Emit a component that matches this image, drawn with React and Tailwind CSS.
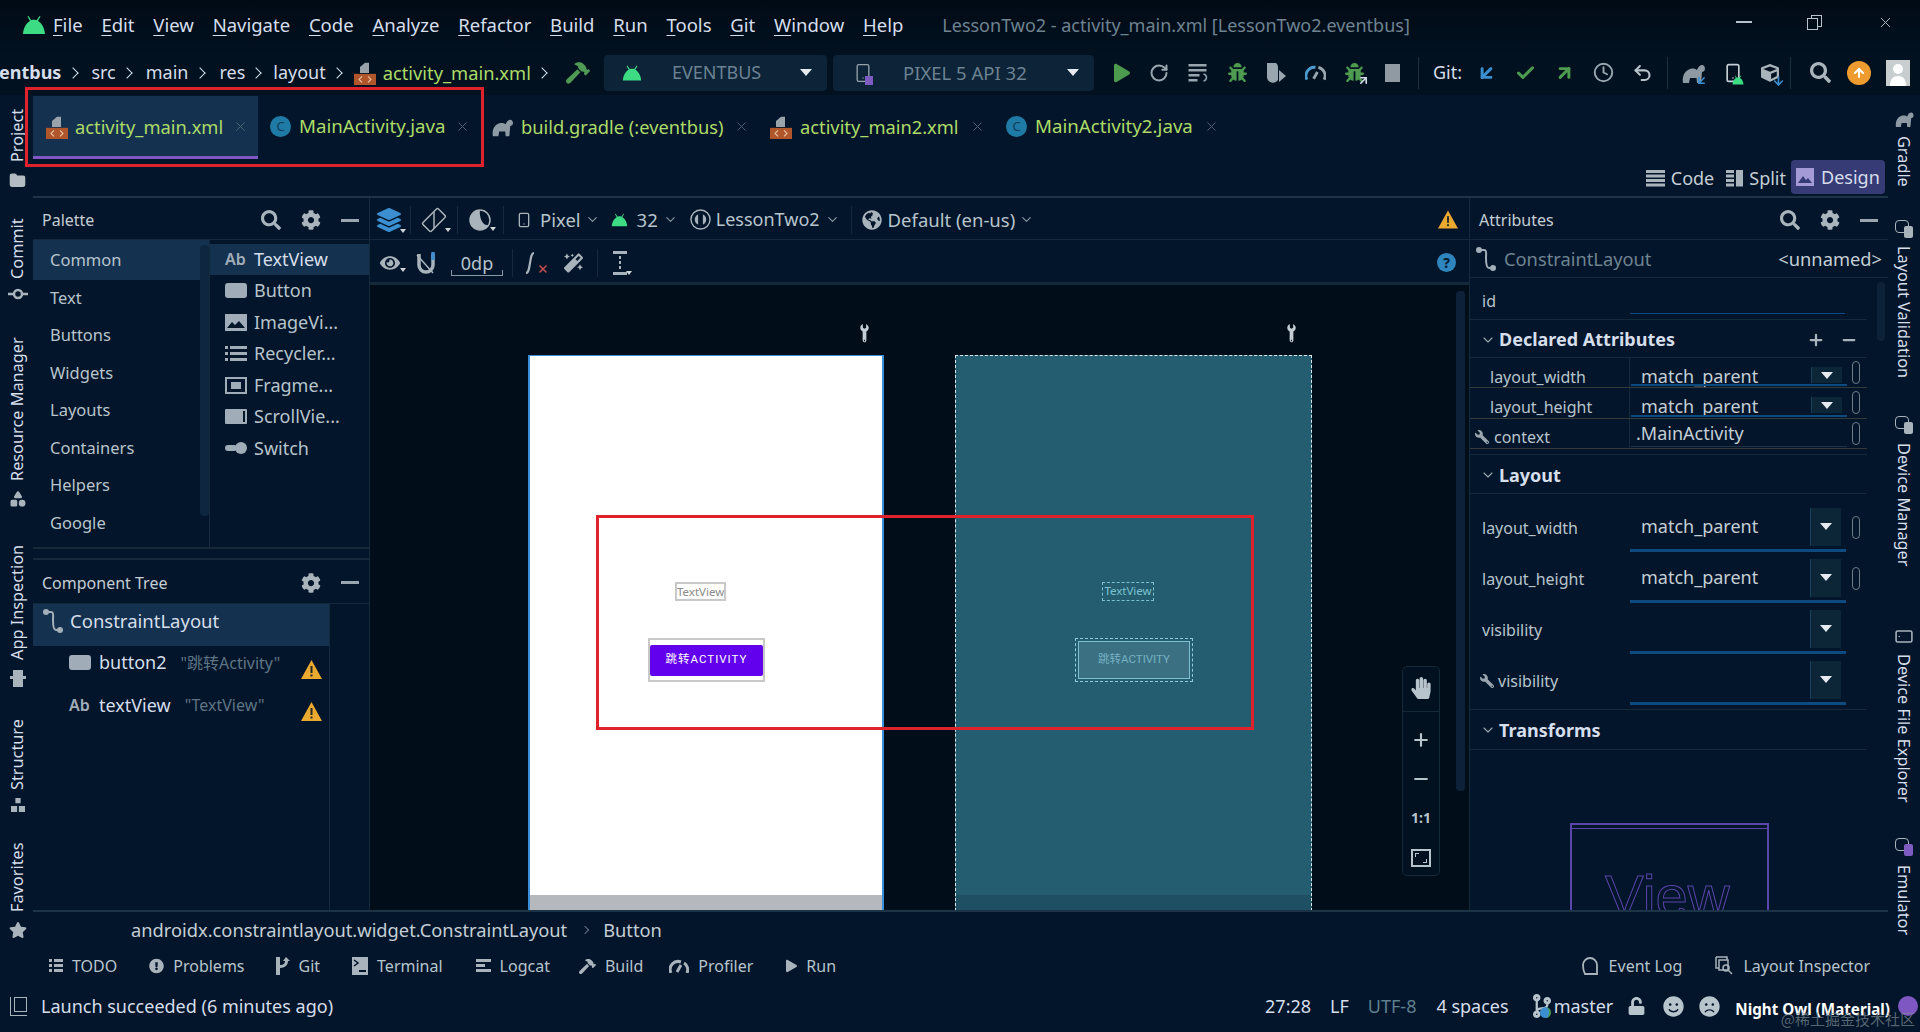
import React from "react";
import { FaCog, FaSearch, FaBug, FaWrench, FaHammer, FaStar, FaHandPaper, FaMagic, FaUnlock, FaSmile, FaFrown, FaPlay, FaExclamationCircle, FaGlobeAmericas, FaEye, FaCodeBranch, FaLayerGroup, FaCube } from "react-icons/fa";
import { ChevronDown, Check, Clock, Undo2, ArrowDownLeft, ArrowUpRight, ArrowUp, Minus, Plus, X, RotateCw, Smartphone, Shapes, Folder } from "lucide-react";

const Android = ({ c = "text-[#3ddc84]", s = "w-[22px] h-[20px]" }) => (
  <svg viewBox="0 0 24 20" className={`${c} ${s} shrink-0`} fill="currentColor"><path d="M1 19C1.5 12 5 7.5 8 6L5.5 1.5l1-.6L9.300 5.200C11 4.600 13 4.600 14.700 5.200L17.500.9l1 .6L16 6c3 1.500 6.500 6 7 13z" /></svg>
);
const XmlIcon = () => (
  <svg viewBox="0 0 22 28" preserveAspectRatio="none" className="w-[22px] h-[24px] shrink-0"><path d="M6 7 L11 2 H15 V14 H6z" fill="#9aa3aa" /><rect x="0" y="15" width="22" height="13" fill="#b0562a" /><path d="M8 18l-3 3.500 3 3.500M14 18l3 3.500-3 3.500" stroke="#e8c0a0" strokeWidth="1.200" fill="none" /></svg>
);
const ClassC = () => (
  <span className="w-[21px] h-[21px] rounded-full bg-[#1f7ba6] text-[#0d3f5a] text-[13px] flex items-center justify-center shrink-0">C</span>
);
const Elephant = ({ s = "w-[22px] h-[20px]" }) => (
  <svg viewBox="0 0 24 20" className={`${s} shrink-0`} fill="#8d99a3"><path d="M2 20c-1-6 1-12 7-14 3-1 6 0 7 1 1-3 3-5 5-5 2 0 3 2 3 4 0 2-2 3-3 3l-1 11h-4l-.500-5H9l-1 5z" /></svg>
);
const TLayout = ({ s = "w-[20px] h-[24px]" }) => (
  <svg viewBox="0 0 20 24" className={`${s} shrink-0`} fill="none" stroke="#a3b0ba" strokeWidth="2"><circle cx="3" cy="3" r="2" fill="#a3b0ba" /><circle cx="17" cy="21" r="2" fill="#a3b0ba" /><path d="M3 3h5c3 0 2 4 2 8s0 10 3 10h4" /></svg>
);
const Warn = ({ s = "w-[21px] h-[19px]" }) => (
  <svg viewBox="0 0 21 19" className={`${s} shrink-0 block`}><path d="M10.500 0L21 19H0z" fill="#eba92f" /><rect x="9.500" y="6" width="2" height="7" fill="#23272a" /><rect x="9.500" y="14.500" width="2" height="2" fill="#23272a" /></svg>
);
const Caret = ({ c = "border-t-[#e5ebf0]" }) => <span className={`block w-0 h-0 border-l-[6px] border-r-[6px] border-t-[7px] border-l-transparent border-r-transparent ${c}`} />;
const MiniCaret = () => <span className="absolute -right-[5px] bottom-0 w-0 h-0 border-l-[3px] border-r-[3px] border-t-[4px] border-l-transparent border-r-transparent border-t-[#d0d6db]" />;
const Gear = () => <FaCog className="text-[20px] text-[#aab4bc]" />;
const Find = () => <FaSearch className="text-[20px] text-[#aab4bc]" />;
const Dash = () => <span className="w-[18px] h-[3px] bg-[#9aa6af] block" />;

const menu = ["File", "Edit", "View", "Navigate", "Code", "Analyze", "Refactor", "Build", "Run", "Tools", "Git", "Window", "Help"];
const Gt = () => <span className="w-[8px] h-[8px] border-t-[1.5px] border-r-[1.5px] border-[#d6deeb] rotate-45 block" />;

function TitleBar() {
  return (
    <div className="h-[50px] flex items-center pl-[22px] bg-linear-to-b from-[#010b15] to-[#01101f] shrink-0">
      <Android s="w-[24px] h-[20px]" />
      <div className="ml-[7px] flex gap-[18.800px] text-[18.500px] text-[#d6deeb]">
        {menu.map((m) => (
          <span key={m}><span className="underline underline-offset-[3px] decoration-1">{m[0]}</span>{m.slice(1)}</span>
        ))}
      </div>
      <span className="ml-[39px] text-[18px] text-[#6f8391]">LessonTwo2 - activity_main.xml [LessonTwo2.eventbus]</span>
      <div className="ml-auto flex items-center text-[#b8c2ca] pr-[26px] gap-[55px] -mt-[6px]">
        <span className="w-[16px] h-[2px] bg-[#b8c2ca] block" />
        <span className="relative w-[15px] h-[15px] block">
          <span className="absolute right-0 top-0 w-[11px] h-[12px] border-[1.5px] border-[#b8c2ca] block" />
          <span className="absolute left-0 bottom-0 w-[11px] h-[12px] border-[1.5px] border-[#b8c2ca] bg-[#010d19] block" />
        </span>
        <X className="w-[17px] h-[17px]" strokeWidth={1.3} />
      </div>
    </div>
  );
}

function Toolbar() {
  return (
    <div className="h-[45px] flex items-center text-[18px] text-[#d6deeb] bg-[#01111f] shrink-0 overflow-hidden">
      <div className="flex items-center w-[600px] shrink-0 -ml-[1px]">
        <span className="font-bold">entbus</span>
        <span className="ml-[8px]"><Gt /></span>
        <span className="ml-[14px]">src</span>
        <span className="ml-[7px]"><Gt /></span>
        <span className="ml-[15px]">main</span>
        <span className="ml-[8px]"><Gt /></span>
        <span className="ml-[15px]">res</span>
        <span className="ml-[7px]"><Gt /></span>
        <span className="ml-[13px]">layout</span>
        <span className="ml-[7px]"><Gt /></span>
        <span className="ml-[13px] flex items-center gap-[7px]"><XmlIcon /><span className="text-[#addb67] text-[18.300px]">activity_main.xml</span></span>
        <span className="ml-[7px]"><Gt /></span>
        <FaHammer className="ml-[20px] text-[24px] text-[#4f9a55]" />
      </div>
      <div className="w-[223px] h-[36px] ml-[5px] bg-[#0c2338] rounded-sm flex items-center pl-[18px] shrink-0 text-[#6c8292]">
        <Android s="w-[20px] h-[18px]" />
        <span className="ml-[30px]">EVENTBUS</span>
        <span className="ml-auto mr-[15px]"><Caret /></span>
      </div>
      <div className="w-[261px] h-[36px] ml-[6px] bg-[#0c2338] rounded-sm flex items-center pl-[20px] shrink-0 text-[#6c8292]">
        <span className="relative"><Smartphone className="w-[20px] h-[24px] text-[#95a2ab]" strokeWidth={1.6} /><span className="absolute right-0 bottom-0 w-[8px] h-[9px] bg-[#7d5bc0] block" /></span>
        <span className="ml-[30px] text-[18.500px]">PIXEL 5 API 32</span>
        <span className="ml-auto mr-[15px]"><Caret /></span>
      </div>
      <div className="flex items-center ml-[20px] gap-[19px] shrink-0">
        <FaPlay className="w-[16px] h-[20px] text-[#4c9b4f]" />
        <RotateCw className="w-[20px] h-[22px] text-[#9aa6af]" strokeWidth={2.4} />
        <svg viewBox="0 0 20 20" className="w-[21px] h-[20px]" fill="#9aa6af"><path d="M0 1h18v2.500H0zM0 6h18v2.500H0zM0 11h11v2.500H0zM0 16h9v2.500H0z" /><path d="M15 11c4 1 4 6 0 7" stroke="#8ca0ad" fill="none" strokeWidth="1.500" /></svg>
        <FaBug className="w-[19px] h-[21px] text-[#4c9b4f]" />
        <svg viewBox="0 0 20 22" className="w-[20px] h-[22px]" fill="#9aa6af"><path d="M1 1h9a5 5 0 0 1 2 4v13a6 6 0 0 1-11-3z" /><path d="M13 8l7 6-7 6z" /></svg>
        <svg viewBox="0 0 22 20" className="w-[21px] h-[20px]" fill="none" strokeWidth="3"><path d="M2 17a9 9 0 0 1 9-13" stroke="#4c9bd0" /><path d="M14 4a9 9 0 0 1 6 13M9 16l4-7" stroke="#9aa6af" /></svg>
        <span className="relative"><FaBug className="w-[19px] h-[21px] text-[#4c9b4f]" /><ArrowUpRight className="absolute -right-[6px] -bottom-[4px] w-[13px] h-[13px] text-[#d6deeb]" strokeWidth={3} /></span>
        <span className="w-[15px] h-[18px] bg-[#8f9aa3] block ml-[2px]" />
      </div>
      <div className="ml-[18px] w-[1px] h-[32px] bg-[#1a2f40]" />
      <span className="ml-[14px] text-[18px]">Git:</span>
      <div className="flex items-center ml-[14px] gap-[18px] shrink-0">
        <ArrowDownLeft className="w-[21px] h-[24px] text-[#3b8fd0]" strokeWidth={3.4} />
        <Check className="w-[21px] h-[24px] text-[#4c9b4f]" strokeWidth={3.5} />
        <ArrowUpRight className="w-[21px] h-[24px] text-[#4c9b4f]" strokeWidth={3.4} />
        <Clock className="w-[21px] h-[21px] text-[#9aa6af]" strokeWidth={2.2} />
        <Undo2 className="w-[21px] h-[22px] text-[#b9c3cb]" strokeWidth={2.4} />
      </div>
      <div className="ml-[14px] w-[1px] h-[32px] bg-[#1a2f40]" />
      <div className="flex items-center ml-[13px] gap-[18px] shrink-0">
        <span className="relative"><Elephant s="w-[24px] h-[20px]" /><ArrowDownLeft className="absolute -right-[3px] -bottom-[4px] w-[13px] h-[13px] text-[#3b8fd0]" strokeWidth={3} /></span>
        <span className="relative"><Smartphone className="w-[20px] h-[24px] text-[#c5ced5]" strokeWidth={2} /><span className="absolute -right-[2px] bottom-0 text-[#3ddc84]"><Android s="w-[14px] h-[10px]" /></span></span>
        <span className="relative"><FaCube className="w-[18px] h-[20px] text-[#a9b3bb]" /><ArrowDownLeft className="absolute -right-[6px] -bottom-[5px] w-[13px] h-[14px] text-[#3b8fd0] -rotate-45" strokeWidth={3} /></span>
      </div>
      <div className="ml-[11px] w-[1px] h-[32px] bg-[#1a2f40]" />
      <FaSearch className="ml-[19px] w-[21px] h-[21px] text-[#aab4bc]" />
      <span className="ml-[16px] w-[24px] h-[24px] rounded-full bg-[#ee9c2f] flex items-center justify-center shrink-0"><ArrowUp className="w-[14px] h-[14px] text-white" strokeWidth={3.5} /></span>
      <span className="ml-[15px] w-[24px] h-[26px] bg-[#c8cdd0] flex items-end justify-center overflow-hidden shrink-0">
        <svg viewBox="0 0 24 26" className="w-[24px] h-[26px]" fill="#fff"><circle cx="12" cy="9" r="5" /><path d="M4 26c0-7 3-10 8-10s8 3 8 10z" /></svg>
      </span>
    </div>
  );
}

const VText = ({ children, h, rev }) => (
  <span className={`${h} flex ${rev ? "" : "rotate-180"} [writing-mode:vertical-rl] text-[16.300px] leading-none text-[#d6deeb] whitespace-nowrap`}>{children}</span>
);

function LeftStrip() {
  return (
    <div className="w-[33px] shrink-0 flex flex-col items-center text-[#a9b3bb] pl-[2px]">
      <div className="mt-[13px]"><VText h="h-[54px]">Project</VText></div>
      <Folder className="mt-[10px] w-[17px] h-[17px] fill-[#b3bcc3] text-[#b3bcc3]" />
      <div className="mt-[29px]"><VText h="h-[61px]">Commit</VText></div>
      <svg viewBox="0 0 20 14" className="mt-[8px] w-[20px] h-[14px]" fill="none" stroke="#aab4bc" strokeWidth="2.500"><circle cx="10" cy="7" r="4" /><path d="M0 7h6M14 7h6" /></svg>
      <div className="mt-[39px]"><VText h="h-[141px]">Resource Manager</VText></div>
      <Shapes className="mt-[9px] w-[18px] h-[18px] text-[#a9b3bb] fill-[#a9b3bb]" />
      <div className="mt-[39px]"><VText h="h-[113px]">App Inspection</VText></div>
      <svg viewBox="0 0 16 18" className="mt-[9px] w-[16px] h-[18px]" fill="#a9b3bb"><path d="M3 1h10v6h3v3h-3v8H3v-8H0V7h3z" /></svg>
      <div className="mt-[32px]"><VText h="h-[71px]">Structure</VText></div>
      <svg viewBox="0 0 16 16" className="mt-[8px] w-[14px] h-[14px]" fill="#a9b3bb"><path d="M5 0h6v6H5zM0 9h7v7H0zM9 9h7v7H9z" /></svg>
      <div className="mt-[34px]"><VText h="h-[66px]">Favorites</VText></div>
      <FaStar className="mt-[9px] text-[18px] text-[#a9b3bb]" />
    </div>
  );
}

function RightStrip() {
  const Dev = ({ dot }) => (
    <span className="relative block w-[18px] h-[18px]">
      <span className="absolute left-0 top-0 w-[14px] h-[13px] border-[1.5px] border-[#a9b3bb] rounded-sm" />
      <span className={`absolute right-0 bottom-0 w-[9px] h-[12px] ${dot ? "bg-[#7d5bc0]" : "bg-[#a9b3bb]"} rounded-[2px]`} />
    </span>
  );
  return (
    <div className="w-[32px] shrink-0 flex flex-col items-center overflow-hidden">
      <div className="mt-[16px]"><Elephant s="w-[20px] h-[16px]" /></div>
      <div className="mt-[9px]"><VText rev h="h-[50px]">Gradle</VText></div>
      <div className="mt-[34px]"><Dev /></div>
      <div className="mt-[8px]"><VText rev h="h-[132px]">Layout Validation</VText></div>
      <div className="mt-[38px]"><Dev /></div>
      <div className="mt-[9px]"><VText rev h="h-[121px]">Device Manager</VText></div>
      <div className="mt-[63px]"><Smartphone className="w-[20px] h-[19px] text-[#a9b3bb] rotate-90" strokeWidth={2} /></div>
      <div className="mt-[8px]"><VText rev h="h-[148px]">Device File Explorer</VText></div>
      <div className="mt-[36px]"><Dev dot /></div>
      <div className="mt-[9px]"><VText rev h="h-[67px]">Emulator</VText></div>
    </div>
  );
}

function Tab({ icon, label, active, w, size = "text-[18.300px]" }) {
  return (
    <div className={`${w} h-[63px] pb-[2px] flex items-center shrink-0 relative ${size} ${active ? "bg-[#143250]" : ""}`}>
      {icon}
      <span className={`text-[#addb67] ${active ? "ml-[7px]" : "ml-[8px]"}`}>{label}</span>
      <X className="ml-auto mr-[10px] w-[15px] h-[15px] text-[#4f6675]" strokeWidth={1.5} />
      {active && <span className="absolute left-0 right-0 bottom-0 h-[3px] bg-[#7e57c2] block" />}
    </div>
  );
}

function Tabs() {
  return (
    <div className="h-[64px] mt-[1px] flex shrink-0 items-start">
      <Tab active w="w-[225px] pl-[13px]" icon={<XmlIcon />} label="activity_main.xml" />
      <Tab w="w-[222px] pl-[12px]" size="text-[18.700px]" icon={<ClassC />} label="MainActivity.java" />
      <Tab w="w-[279px] pl-[11px]" icon={<Elephant />} label="build.gradle (:eventbus)" />
      <Tab w="w-[236px] pl-[11px]" icon={<XmlIcon />} label="activity_main2.xml" />
      <Tab w="w-[234px] pl-[11px]" size="text-[18.700px]" icon={<ClassC />} label="MainActivity2.java" />
    </div>
  );
}

function ModeRow() {
  return (
    <div className="h-[38px] shrink-0 flex justify-end items-start border-b-[2px] border-[#1c3446] text-[18px] text-[#c5ced5] pr-[3px]">
      <div className="flex items-center h-[36px] gap-[6px]">
        <svg viewBox="0 0 19 17" className="w-[19px] h-[17px]" fill="#a9b3bb"><path d="M0 0h19v3H0zM0 4.500h19v3H0zM0 9h19v3H0zM0 13.500h19v3H0z" /></svg>
        <span>Code</span>
      </div>
      <div className="flex items-center h-[36px] gap-[6px] ml-[12px]">
        <svg viewBox="0 0 17 17" className="w-[17px] h-[17px]" fill="#a9b3bb"><path d="M0 0h8v3H0zM0 4.500h8v3H0zM0 9h8v3H0zM0 13.500h8v3H0zM10 0h7v16.500h-7z" /></svg>
        <span>Split</span>
      </div>
      <div className="flex items-center h-[34px] gap-[7px] ml-[5px] bg-[#363b76] rounded-sm px-[5px] w-[94px]">
        <svg viewBox="0 0 18 18" className="w-[18px] h-[18px]"><rect width="18" height="18" fill="#a49bd6" /><path d="M2 15l5-7 3 4 2-2 4 5z" fill="#363b76" /></svg>
        <span className="text-[#d6deeb]">Design</span>
      </div>
    </div>
  );
}

function PanelHead({ title, search, h = "h-[42px]" }) {
  return (
    <div className={`${h} flex items-center pl-[9px] pt-[3px] border-b border-[#14293a] text-[#c5ced5] text-[16px] shrink-0`}>
      <span>{title}</span>
      <div className="ml-auto flex items-center gap-[20px] pr-[10px]">
        {search && <Find />}
        <Gear />
        <Dash />
      </div>
    </div>
  );
}

const IconBox = ({ children }) => <span className="w-[22px] h-[18px] flex items-center justify-center shrink-0">{children}</span>;
const AbIcon = () => <span className="w-[22px] text-[16px] font-semibold text-[#a0adb8] leading-none shrink-0">Ab</span>;
const BtnIcon = () => <span className="w-[22px] h-[15px] rounded-[3px] bg-[#a0adb8] block shrink-0" />;
const palette = [
  [<AbIcon />, "TextView"],
  [<BtnIcon />, "Button"],
  [<svg viewBox="0 0 22 17" className="w-[22px] h-[17px]"><rect width="22" height="17" fill="#a0adb8" /><path d="M2 14l5-6 3 3 4-4 6 7z" fill="#02162a" /></svg>, "ImageVi..."],
  [<svg viewBox="0 0 22 15" className="w-[22px] h-[15px]" fill="#a0adb8"><path d="M0 0h3v3H0zM5 0h17v3H5zM0 6h3v3H0zM5 6h17v3H5zM0 12h3v3H0zM5 12h17v3H5z" /></svg>, "Recycler..."],
  [<svg viewBox="0 0 22 17" className="w-[22px] h-[17px]"><rect x="1" y="1" width="20" height="15" fill="none" stroke="#a0adb8" strokeWidth="2" /><rect x="6" y="5" width="10" height="7" fill="#a0adb8" /></svg>, "Fragme..."],
  [<svg viewBox="0 0 22 15" className="w-[22px] h-[15px]"><rect width="22" height="15" rx="1" fill="#a0adb8" /><rect x="18" y="2" width="2" height="11" fill="#02162a" /></svg>, "ScrollVie..."],
  [<svg viewBox="0 0 22 12" className="w-[22px] h-[12px]" fill="#a0adb8"><rect x="0" y="3" width="12" height="6" rx="3" /><circle cx="16" cy="6" r="6" /></svg>, "Switch"],
];
const cats = ["Common", "Text", "Buttons", "Widgets", "Layouts", "Containers", "Helpers", "Google"];

function LeftPanel() {
  return (
    <div className="w-[337px] shrink-0 border-r border-[#14293a] flex flex-col text-[#b8c4cc] text-[16.500px]">
      <PanelHead title="Palette" search />
      <div className="flex h-[307px] shrink-0">
        <div className="w-[176px] flex relative">
          <div className="flex-1 pt-[2px]">
            {cats.map((c, i) => (
              <div key={c} className={`flex items-center pl-[17px] ${i === 0 ? "h-[39.500px] -mt-[2px] pt-[2px] bg-[#143250]" : "h-[37.500px]"}`}>{c}</div>
            ))}
          </div>
          <span className="absolute right-0 top-[5px] w-[9px] h-[271px] rounded-[4px] bg-[#0e2640] block" />
        </div>
        <div className="flex-1 border-l border-[#14293a] pt-[3.500px] text-[18px]">
          {palette.map(([ic, l], i) => (
            <div key={l} className={`h-[31.500px] flex items-center pl-[15px] gap-[7px] ${i === 0 ? "bg-[#143250] text-[#d6deeb]" : ""}`}>
              <IconBox>{ic}</IconBox>
              <span>{l}</span>
            </div>
          ))}
        </div>
      </div>
      <div className="h-[13px] shrink-0 border-t-[2px] border-b-[2px] border-[#14293a]" />
      <PanelHead title="Component Tree" h="h-[43.500px]" />
      <div className="flex-1 flex">
        <div className="w-[297px] border-r border-[#14293a]">
          <div className="h-[42px] pb-[8px] bg-[#143250] flex items-center pl-[10px] gap-[7px] text-[18.500px] text-[#d6deeb]">
            <TLayout />
            <span>ConstraintLayout</span>
          </div>
          <div className="h-[42.500px] pb-[8px] flex items-center pl-[36px] text-[18px] text-[#d6deeb]">
            <BtnIcon />
            <span className="ml-[8px]">button2</span>
            <span className="ml-[14px] text-[16px] text-[#5f7484]">"跳转Activity"</span>
            <span className="ml-auto mr-[7px] mt-[13px]"><Warn /></span>
          </div>
          <div className="h-[42.500px] pb-[8px] flex items-center pl-[36px] text-[18px] text-[#d6deeb]">
            <AbIcon />
            <span className="ml-[8px]">textView</span>
            <span className="ml-[14px] text-[16px] text-[#5f7484]">"TextView"</span>
            <span className="ml-auto mr-[7px] mt-[13px]"><Warn /></span>
          </div>
        </div>
      </div>
    </div>
  );
}

const TB = ({ children, cls = "" }) => <span className={`relative flex items-center justify-center ${cls}`}>{children}</span>;
const Chev = () => <ChevronDown className="w-[15px] h-[15px] text-[#8a98a3] block" strokeWidth={1.8} />;
const VSep = () => <span className="w-[1px] h-[28px] bg-[#14293a] block" />;

function CanvasTop() {
  return (
    <>
      <div className="h-[42px] pt-[2px] flex items-center border-b border-[#14293a] text-[18.500px] text-[#b8c4cc] shrink-0">
        <span className="ml-[7px]"><TB><FaLayerGroup className="w-[24px] h-[26px] text-[#3b8fd0]" /><MiniCaret /></TB></span>
        <span className="ml-[9px]"><VSep /></span>
        <span className="ml-[11px]"><TB><svg viewBox="0 0 24 24" className="w-[24px] h-[24px] rotate-45" fill="none" stroke="#a9b3bb" strokeWidth="1.500"><rect x="6" y="1" width="12" height="22" rx="1.500" /><path d="M6 6l12 12" /></svg><MiniCaret /></TB></span>
        <span className="ml-[11px]"><VSep /></span>
        <span className="ml-[11px]"><TB><svg viewBox="0 0 22 22" className="w-[22px] h-[22px]"><circle cx="11" cy="11" r="10" fill="none" stroke="#a9b3bb" strokeWidth="1.500" /><path d="M11 1a10 10 0 0 0 0 20c6 0 8-4 8-5-6 1-9-9-8-15z" fill="#a9b3bb" /></svg><MiniCaret /></TB></span>
        <span className="ml-[12px]"><VSep /></span>
        <Smartphone className="ml-[12px] w-[16px] h-[22px] text-[#a9b3bb]" strokeWidth={2} />
        <span className="ml-[8px]">Pixel</span>
        <span className="ml-[4px]"><Chev /></span>
        <span className="ml-[11px]"><Android s="w-[17px] h-[14px]" /></span>
        <span className="ml-[9px]">32</span>
        <span className="ml-[5px]"><Chev /></span>
        <svg viewBox="0 0 22 22" className="ml-[12px] w-[21px] h-[21px]"><circle cx="11" cy="11" r="10" fill="none" stroke="#a9b3bb" strokeWidth="1.500" /><circle cx="11" cy="11" r="6" fill="#a9b3bb" /><path d="M11 5v12" stroke="#02162a" strokeWidth="5" /></svg>
        <span className="ml-[5px] text-[18px]">LessonTwo2</span>
        <span className="ml-[5px]"><Chev /></span>
        <span className="ml-[11px]"><VSep /></span>
        <FaGlobeAmericas className="ml-[10px] w-[20px] h-[20px] text-[#a9b3bb]" />
        <span className="ml-[6px]">Default (en-us)</span>
        <span className="ml-[4px]"><Chev /></span>
        <span className="ml-auto mr-[11px]"><Warn s="w-[20px] h-[19px]" /></span>
      </div>
      <div className="h-[45px] pt-[3px] flex items-center border-b-[3px] border-[#14293a] text-[18px] text-[#b8c4cc] shrink-0">
        <span className="ml-[9px]"><TB><FaEye className="w-[22px] h-[18px] text-[#a9b3bb]" /><MiniCaret /></TB></span>
        <svg viewBox="0 0 22 24" className="ml-[14px] w-[22px] h-[24px]" fill="none" strokeWidth="3.500"><path d="M4 3v11a7 7 0 0 0 14 0V3" stroke="#a9b3bb" /><path d="M18 1v8" stroke="#3b8fd0" /><path d="M2 4l16 18" stroke="#a9b3bb" strokeWidth="1.500" /></svg>
        <span className="relative ml-[14px] w-[52px] h-[26px] flex items-center justify-center leading-none">
          0dp
          <span className="absolute left-0 right-0 bottom-0 h-[6px] border-b border-l border-r border-[#8a98a3] block" />
        </span>
        <span className="ml-[9px]"><VSep /></span>
        <span className="ml-[9px] relative"><svg viewBox="0 0 24 24" className="w-[24px] h-[24px]" fill="none" stroke="#a9b3bb" strokeWidth="2.200"><path d="M4 22c5 0 3-20 8-20" /></svg><X className="absolute -right-[3px] bottom-0 w-[12px] h-[12px] text-[#c94f4f]" strokeWidth={3} /></span>
        <FaMagic className="ml-[18px] w-[19px] h-[20px] text-[#a9b3bb]" />
        <span className="ml-[14px]"><VSep /></span>
        <span className="ml-[15px]"><TB><svg viewBox="0 0 14 24" className="w-[14px] h-[24px]" fill="#a9b3bb"><path d="M0 0h14v3H0zM0 21h14v3H0zM6 5h2v3H6zM6 10h2v3H6zM6 15h2v3H6z" /></svg><MiniCaret /></TB></span>
        <span className="ml-auto mr-[13px] w-[19px] h-[19px] rounded-full bg-[#2f86bf] text-[#02162a] text-[14px] font-bold flex items-center justify-center">?</span>
      </div>
    </>
  );
}

const Pin = () => <FaWrench className="w-[15px] h-[17px] text-[#c5ced5] -rotate-45" />;

function Phone() {
  return (
    <div className="relative w-[356px] h-[556px] shrink-0 bg-white border-x-2 border-t border-[#3a8fd8]">
      <div className="absolute left-[145px] top-[226px] w-[51px] h-[19px] border-2 border-[#c8c8c8] text-[11.500px] leading-[15px] text-[#8a8a8a] text-center overflow-hidden">TextView</div>
      <div className="absolute left-[118px] top-[282px] w-[117px] h-[44px] border-2 border-[#c8c8c8] flex items-center justify-center">
        <div className="w-[114px] h-[31px] rounded-[2px] bg-[#6200ee] text-white text-[11.500px] tracking-[1px] flex items-center justify-center" style={{ fontFamily: '"Roboto","Noto Sans CJK SC",sans-serif' }}>跳转ACTIVITY</div>
      </div>
      <div className="absolute left-0 right-0 bottom-0 h-[16px] bg-[#b5b9bd]" />
    </div>
  );
}
function Blueprint() {
  return (
    <div className="relative w-[357px] h-[556px] shrink-0 bg-[#235d6f] border-x border-t border-dashed border-[#dbe6ea]">
      <div className="absolute left-[146px] top-[226px] w-[52px] h-[19px] border border-dashed border-[#7cc0d0] text-[11.500px] leading-[16px] text-[#7cc0d0] text-center overflow-hidden">TextView</div>
      <div className="absolute left-[119px] top-[282px] w-[118px] h-[44px] border border-dashed border-[#8fcbd8] p-[2px]">
        <div className="w-full h-full border border-[#7cc0d0] bg-[#3b7083] text-[#76b1c2] text-[11.500px] flex items-center justify-center" style={{ fontFamily: '"Roboto","Noto Sans CJK SC",sans-serif' }}>跳转ACTIVITY</div>
      </div>
      <div className="absolute left-0 right-0 bottom-0 h-[16px] bg-[#1e4f63]" />
    </div>
  );
}

function Canvas() {
  return (
    <div className="w-[1099px] shrink-0 flex flex-col">
      <CanvasTop />
      <div className="flex-1 relative bg-[#010d19] overflow-hidden flex flex-col">
        <div className="flex h-[70px] shrink-0 items-end pb-[14px]">
          <span className="ml-[487px]"><Pin /></span>
          <span className="ml-[412px]"><Pin /></span>
        </div>
        <div className="flex pl-[158px] gap-[71px]">
          <Phone />
          <Blueprint />
        </div>
        <span className="absolute right-[4px] top-[6px] w-[9px] h-[500px] bg-[#0d2238] rounded-[4px] block" />
        <div className="absolute left-[1032px] top-[381px] w-[38px] h-[210px] rounded-[5px] border border-[#14293a] bg-[#01111f] flex flex-col items-center text-[#b8c4cc]">
          <FaHandPaper className="mt-[10px] w-[20px] h-[22px] text-[#b8c4cc] shrink-0" />
          <span className="mt-[12px] w-full h-[1px] bg-[#14293a] block shrink-0" />
          <Plus className="mt-[18px] w-[20px] h-[20px] shrink-0" strokeWidth={2.6} />
          <Minus className="mt-[19px] w-[20px] h-[20px] shrink-0" strokeWidth={2.6} />
          <span className="mt-[19px] text-[14px] font-bold leading-[20px]">1:1</span>
          <span className="mt-[21px] w-[20px] h-[18px] border-2 border-[#b8c4cc] block relative shrink-0"><span className="absolute left-[2px] top-[2px] w-[4px] h-[4px] border-l border-t border-[#b8c4cc]" /><span className="absolute right-[2px] bottom-[2px] w-[4px] h-[4px] border-r border-b border-[#b8c4cc]" /></span>
        </div>
      </div>
    </div>
  );
}

const Pill = () => <span className="w-[8px] h-[23px] rounded-full border border-[#6d7c87] block shrink-0" />;
const Drop = ({ h = "h-[38px]" }) => <span className={`w-[31px] ${h} bg-[#0c2638] border-l border-[#17405a] flex items-center justify-center shrink-0`}><Caret /></span>;

function SectionHead({ title, extra, h }) {
  return (
    <div className={`${h} flex items-center pl-[10px] pt-[2px] border-b border-[#14293a] mr-[21px] text-[18px] font-bold text-[#d6deeb] shrink-0`}>
      <ChevronDown className="w-[16px] h-[16px] text-[#9aa6af]" strokeWidth={1.7} />
      <span className="ml-[3px]">{title}</span>
      {extra}
    </div>
  );
}

function SmallRow({ label, value, wrench, dd, h }) {
  return (
    <div className={`${h} flex border-b border-[#34393a] mr-[21px] text-[16px] text-[#b8c4cc] shrink-0`}>
      <div className={`w-[160px] border-r border-[#14293a] flex items-center ${wrench ? "pl-[5px] gap-[5px]" : "pl-[20px]"} pt-[8px]`}>
        {wrench && <FaWrench className="w-[14px] h-[14px] text-[#9aa6af] scale-x-[-1]" />}
        <span>{label}</span>
      </div>
      <div className="w-[216px] ml-[1px] relative flex items-center">
        <span className={`text-[18px] text-[#c5ced5] ${dd ? "pl-[10px] pt-[8px]" : "pl-[5px] pt-[1px]"}`}>{value}</span>
        {dd && <span className="absolute right-[5px] top-[9px]"><Drop h="h-[16px]" /></span>}
        {dd && <span className="absolute left-0 right-0 bottom-[1px] h-[2px] bg-[#0d4a80] block" />}
        {!dd && <span className="absolute left-0 right-0 bottom-[1px] h-[1px] bg-[#1c3446] block" />}
      </div>
      <span className="ml-[5px] self-center"><Pill /></span>
    </div>
  );
}

function BigRow({ label, value, wrench, pill }) {
  return (
    <div className="h-[51px] flex items-start text-[16px] text-[#b8c4cc]">
      <div className={`w-[160px] h-[40px] flex items-center ${wrench ? "pl-[10px] gap-[4px]" : "pl-[12px]"}`}>
        {wrench && <FaWrench className="w-[14px] h-[14px] text-[#9aa6af] scale-x-[-1]" />}
        <span>{label}</span>
      </div>
      <div className="w-[216px]">
        <div className="h-[38px] flex items-center justify-between pr-[5px]">
          <span className="pl-[11px] text-[18px] text-[#c5ced5]">{value}</span>
          <Drop />
        </div>
        <span className="block mt-[3px] h-[3px] bg-[#0d4a80]" />
      </div>
      {pill && <span className="ml-[6px] mt-[8px]"><Pill /></span>}
    </div>
  );
}

function Attributes() {
  return (
    <div className="flex-1 border-l border-[#14293a] flex flex-col relative overflow-hidden">
      <PanelHead title="Attributes" search />
      <div className="h-[38px] flex items-center pl-[6px] border-b border-[#14293a] shrink-0 text-[18.300px]">
        <TLayout />
        <span className="ml-[8px] text-[#6f8391]">ConstraintLayout</span>
        <span className="ml-auto mr-[6px] text-[#c5ced5] text-[18.300px]">&lt;unnamed&gt;</span>
      </div>
      <div className="h-[42px] pt-[4px] flex items-center border-b border-[#14293a] mr-[21px] shrink-0 relative text-[16px] text-[#b8c4cc]">
        <span className="pl-[12px]">id</span>
        <span className="absolute left-[160px] w-[215px] bottom-[5px] h-[1px] bg-[#0d4a80] block" />
      </div>
      <SectionHead h="h-[38px]" title="Declared Attributes" extra={<span className="ml-auto mr-[9px] flex items-center gap-[15px] text-[#a9b3bb]"><Plus className="w-[18px] h-[18px]" strokeWidth={3} /><Minus className="w-[18px] h-[18px]" strokeWidth={3} /></span>} />
      <SmallRow h="h-[30px]" label="layout_width" value="match_parent" dd />
      <SmallRow h="h-[30.500px]" label="layout_height" value="match_parent" dd />
      <SmallRow h="h-[30px]" label="context" value=".MainActivity" wrench />
      <div className="h-[6.500px] shrink-0 border-b border-[#14293a] mr-[21px]" />
      <SectionHead h="h-[39px]" title="Layout" />
      <div className="pt-[13.500px] shrink-0 h-[216px] border-b border-[#14293a] mr-[21px]">
        <BigRow label="layout_width" value="match_parent" pill />
        <BigRow label="layout_height" value="match_parent" pill />
        <BigRow label="visibility" value="" />
        <BigRow label="visibility" value="" wrench />
      </div>
      <SectionHead h="h-[39.500px]" title="Transforms" />
      <div className="mt-[73px] ml-[100px] w-[199px] h-[120px] border-2 border-[#5b45a8] relative shrink-0">
        <div className="h-[4px] border-b border-[#5b45a8]" />
        <span className="absolute left-[33px] top-[42px] text-[58px] leading-none text-transparent [-webkit-text-stroke:1px_#5b45a8]" style={{ fontFamily: '"Liberation Sans",sans-serif' }}>View</span>
      </div>
      <span className="absolute right-[3px] top-[84px] w-[8px] h-[59px] rounded-[4px] bg-[#0d2238] block" />
    </div>
  );
}

function ToolTabs() {
  const T = ({ ic, l, cls }) => <span className={`flex items-center gap-[9px] ${cls}`}>{ic}<span>{l}</span></span>;
  return (
    <div className="h-[38px] flex items-center text-[16px] text-[#b8c4cc] shrink-0">
      <T cls="ml-[49px]" ic={<svg viewBox="0 0 14 14" className="w-[14px] h-[14px]" fill="#a9b3bb"><path d="M0 0h3v3H0zM5 0h9v3H5zM0 5h3v3H0zM5 5h9v3H5zM0 10h3v3H0zM5 10h9v3H5z" /></svg>} l="TODO" />
      <T cls="ml-[32px]" ic={<FaExclamationCircle className="w-[15px] h-[16px] text-[#a9b3bb]" />} l="Problems" />
      <T cls="ml-[31px]" ic={<svg viewBox="0 0 14 18" className="w-[14px] h-[18px]" fill="#a9b3bb"><path d="M0 0h4v18H0zM4 8c4 0 5-2 5-4H7l3-4 4 4h-2c0 4-3 7-8 7z" /></svg>} l="Git" />
      <T cls="ml-[32px]" ic={<svg viewBox="0 0 16 18" className="w-[16px] h-[18px]"><rect width="16" height="18" fill="#a9b3bb" /><path d="M2 3l4 3-4 3" stroke="#02152a" strokeWidth="1.500" fill="none" /><path d="M7 13h7v2H7z" fill="#02152a" /></svg>} l="Terminal" />
      <T cls="ml-[33px]" ic={<svg viewBox="0 0 15 14" className="w-[15px] h-[14px]" fill="#a9b3bb"><path d="M0 0h15v3H0zM0 5h9v3H0zM0 10h15v3H0z" /></svg>} l="Logcat" />
      <T cls="ml-[29px]" ic={<FaHammer className="w-[17px] h-[17px] text-[#a9b3bb]" />} l="Build" />
      <T cls="ml-[26px]" ic={<svg viewBox="0 0 20 14" className="w-[20px] h-[14px]" fill="none" stroke="#a9b3bb" strokeWidth="3"><path d="M2 14a8 8 0 0 1 10-11M15 4a8 8 0 0 1 3 10M8 13l4-7" /></svg>} l="Profiler" />
      <T cls="ml-[33px]" ic={<FaPlay className="w-[11px] h-[14px] text-[#a9b3bb]" />} l="Run" />
      <T cls="ml-auto" ic={<svg viewBox="0 0 20 20" className="w-[20px] h-[20px]" fill="none" stroke="#a9b3bb" strokeWidth="1.800"><path d="M5 18h12V9a7 7 0 1 0-14 0c0 4 1 7 2 9z" /></svg>} l="Event Log" />
      <T cls="ml-[33px] mr-[50px]" ic={<svg viewBox="0 0 19 20" className="w-[19px] h-[20px]" fill="none" stroke="#a9b3bb" strokeWidth="1.500"><path d="M1 1h11v3M1 1v11h3" /><rect x="4" y="4" width="9" height="10" /><circle cx="11" cy="12" r="3" /><path d="M13 14l4 4" /></svg>} l="Layout Inspector" />
    </div>
  );
}

function Status() {
  return (
    <div className="h-[47px] flex items-center text-[18px] text-[#d6deeb] shrink-0 relative pb-[5px]">
      <span className="ml-[10px] w-[17px] h-[19px] border-l border-b border-[#a9b3bb] block p-0 relative"><span className="absolute left-[3px] top-0 right-0 bottom-[3px] border border-[#a9b3bb] block" /></span>
      <span className="ml-[14px]">Launch succeeded (6 minutes ago)</span>
      <span className="ml-auto">27:28</span>
      <span className="ml-[19px]">LF</span>
      <span className="ml-[19px] text-[#5f7f8f]">UTF-8</span>
      <span className="ml-[20px]">4 spaces</span>
      <span className="ml-[24px] relative"><FaCodeBranch className="w-[18px] h-[24px] text-[#b8c4cc]" /><span className="absolute right-0 bottom-0 w-[11px] h-[11px] rounded-full bg-[#3b8fd0] border-r-2 border-[#4c9b4f] block" /></span>
      <span className="ml-[3px]">master</span>
      <FaUnlock className="ml-[15px] w-[17px] h-[18px] text-[#b8c4cc]" />
      <FaSmile className="ml-[18px] w-[21px] h-[21px] text-[#b8c4cc]" />
      <FaFrown className="ml-[15px] w-[21px] h-[21px] text-[#b8c4cc]" />
      <span className="ml-[15px] text-[15.200px] font-bold text-white mt-[6px]">Night Owl (Material)</span>
      <span className="ml-[8px] mr-[2px] w-[20px] h-[20px] rounded-full bg-[#7e57c2] block" />
      <span className="absolute right-[5px] bottom-[2px] text-[15px] text-[#7d8a93]/70" style={{ fontFamily: '"Noto Sans CJK SC",sans-serif' }}>@稀土掘金技术社区</span>
    </div>
  );
}

export default function App() {
  return (
    <div className="relative w-[1920px] h-[1032px] overflow-hidden bg-[#02152a] flex flex-col" style={{ fontFamily: '"Noto Sans","Noto Sans CJK SC",sans-serif' }}>
      <TitleBar />
      <Toolbar />
      <div className="h-[852px] flex shrink-0">
        <LeftStrip />
        <div className="w-[1855px] flex flex-col shrink-0">
          <Tabs />
          <ModeRow />
          <div className="h-[714px] flex shrink-0 border-b-[2px] border-[#1c3446]">
            <LeftPanel />
            <Canvas />
            <Attributes />
          </div>
          <div className="h-[35px] flex items-center text-[18.300px] text-[#c5ced5] pl-[98px] shrink-0">
            <span>androidx.constraintlayout.widget.ConstraintLayout</span>
            <span className="ml-[15px] w-[6px] h-[6px] border-t border-r border-[#5f7484] rotate-45 block" />
            <span className="ml-[15px]">Button</span>
          </div>
        </div>
        <RightStrip />
      </div>
      <ToolTabs />
      <Status />
      <div className="absolute left-[25px] top-[87px] w-[459px] h-[80px] border-[3px] border-[#e0222d] pointer-events-none" />
      <div className="absolute left-[596px] top-[515px] w-[658px] h-[215px] border-[3px] border-[#e0222d] pointer-events-none" />
    </div>
  );
}
